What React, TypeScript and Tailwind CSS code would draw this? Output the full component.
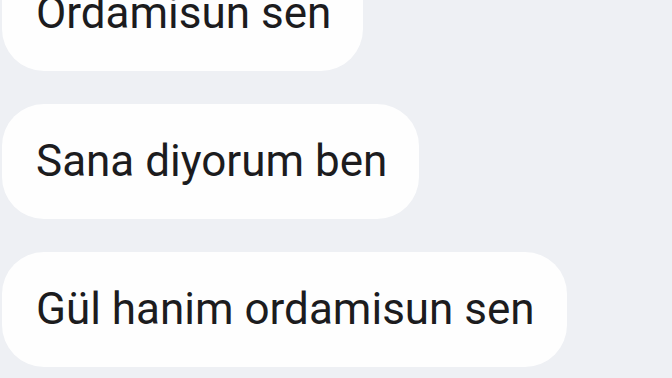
import React from "react";

const messages = ["Ordamisun sen", "Sana diyorum ben", "Gül hanim ordamisun sen"];

export default function App() {
  return (
    <div
      className="w-[672px] h-[378px] overflow-hidden bg-[#eef0f4]"
      style={{ fontFamily: "Roboto, 'Noto Sans', sans-serif" }}
    >
      <div className="flex flex-col items-start gap-[33px] pl-[2px] mt-[-44px]">
        {messages.map((m) => (
          <div
            key={m}
            className="h-[115px] flex items-center rounded-[42px] bg-[#fefefe] pl-[34px] pr-[32px] pb-[2px] text-[44px] leading-none text-[#1c1c1e] whitespace-nowrap"
          >
            {m}
          </div>
        ))}
      </div>
    </div>
  );
}
